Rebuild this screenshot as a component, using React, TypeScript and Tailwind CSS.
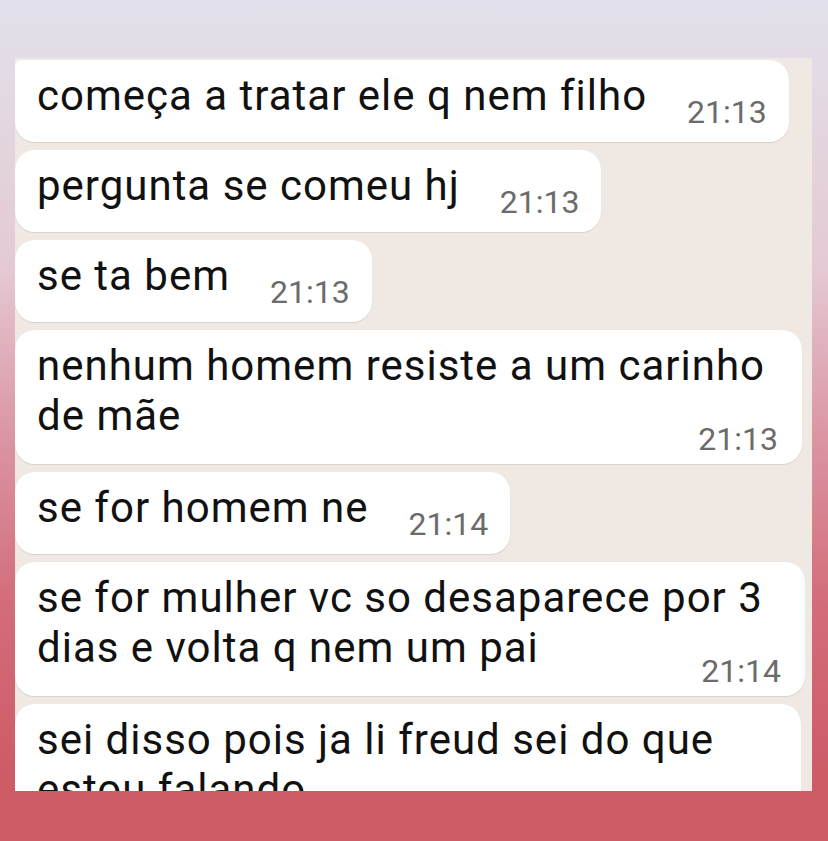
import React from "react";

function Single({ text, time, first }: { text: string; time: string; first?: boolean }) {
  return (
    <div
      className={`self-start flex items-end bg-white pl-[22px] pr-[22px] pt-[11px] pb-[21px] rounded-[20px] shadow-[0_1px_1px_rgba(0,0,0,0.10)] ${
        first ? "rounded-tl-[6px]" : ""
      }`}
    >
      <span className="text-[42px] leading-[50px] tracking-[1px] text-[#111111] whitespace-nowrap">{text}</span>
      <span className="ml-[40px] mb-[-6px] text-[32px] leading-[30px] text-[#6b6b6b] whitespace-nowrap">
        {time}
      </span>
    </div>
  );
}

function Multi({ lines, time, width }: { lines: string[]; time?: string; width: string }) {
  return (
    <div
      className={`self-start bg-white pl-[22px] pr-[24px] pt-[11px] pb-[10px] rounded-[20px] shadow-[0_1px_1px_rgba(0,0,0,0.10)] ${width}`}
    >
      <div className="text-[42px] leading-[50px] tracking-[1px] text-[#111111] whitespace-nowrap">
        {lines.map((l, i) => (
          <div key={i}>{l}</div>
        ))}
      </div>
      {time && (
        <div className="flex justify-end -mt-[17px]">
          <span className="text-[32px] leading-[30px] text-[#6b6b6b]">{time}</span>
        </div>
      )}
    </div>
  );
}

export default function App() {
  return (
    <div
      className="w-[828px] h-[841px] overflow-hidden bg-[linear-gradient(180deg,#e2e1eb_0%,#e3d6e0_15%,#e4c9d3_32%,#db95a3_52%,#d36c7a_72%,#cd5c67_92%,#cc5b66_100%)] pt-[58px]"
      style={{ fontFamily: "Roboto, 'Noto Sans', Arial, sans-serif" }}
    >
      <div className="ml-[15px] w-[797px] h-[733px] overflow-hidden bg-[#efe8e3] pt-[2px] flex flex-col gap-[8px]">
        <Single text="começa a tratar ele q nem filho" time="21:13" first />
        <Single text="pergunta se comeu hj" time="21:13" />
        <Single text="se ta bem" time="21:13" />
        <Multi lines={["nenhum homem resiste a um carinho", "de mãe"]} time="21:13" width="w-[787px]" />
        <Single text="se for homem ne" time="21:14" />
        <Multi lines={["se for mulher vc so desaparece por 3", "dias e volta q nem um pai"]} time="21:14" width="w-[790px]" />
        <Multi lines={["sei disso pois ja li freud sei do que", "estou falando"]} width="w-[786px]" />
      </div>
    </div>
  );
}
